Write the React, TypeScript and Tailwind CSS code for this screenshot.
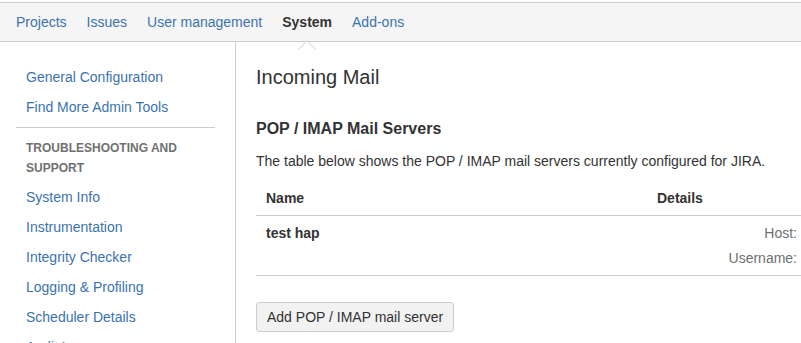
import React from "react";

const link = "text-[#3b73af]";

function Arrow() {
  return (
    <svg
      className="absolute left-1/2 -translate-x-1/2 bottom-[-9px]"
      width="18"
      height="10"
      viewBox="0 0 18 10"
    >
      <polygon points="0,10 9,1 18,10" fill="#ffffff" />
      <polyline points="0,9.5 9,0.8 18,9.5" fill="none" stroke="#cccccc" strokeWidth="1" />
    </svg>
  );
}

export default function App() {
  const navItems = ["Projects", "Issues", "User management", "System", "Add-ons"];
  const sideTop = ["General Configuration", "Find More Admin Tools"];
  const sideBottom = [
    "System Info",
    "Instrumentation",
    "Integrity Checker",
    "Logging & Profiling",
    "Scheduler Details",
    "Audit Log",
  ];
  return (
    <div
      className="w-[801px] h-[343px] overflow-hidden bg-white text-[14px] text-[#333333]"
      style={{ fontFamily: '"Liberation Sans", Arial, sans-serif' }}
    >
      <div className="pt-[2px]">
        <nav className="h-[40px] bg-[#f5f5f5] border-t border-b border-[#cccccc] flex items-center pl-[6px]">
          {navItems.map((n) => (
            <span
              key={n}
              className={
                n === "System"
                  ? "relative px-[10px] leading-[38px] font-bold text-[#333333]"
                  : `px-[10px] leading-[38px] ${link}`
              }
            >
              {n}
              {n === "System" && <Arrow />}
            </span>
          ))}
        </nav>
      </div>
      <div className="flex">
        <aside className="w-[236px] shrink-0 border-r border-[#cccccc] pt-[20px] pl-[16px] pr-[20px] h-[400px]">
          {sideTop.map((s) => (
            <div key={s} className={`pl-[10px] leading-[20px] py-[5px] ${link}`}>
              {s}
            </div>
          ))}
          <div className="border-t border-[#cccccc] mt-[5px] mb-[10px]" />
          <div className="pl-[10px] text-[12px] font-bold leading-[20px] text-[#707070] pr-[20px] mb-[4px]">
            TROUBLESHOOTING AND SUPPORT
          </div>
          {sideBottom.map((s) => (
            <div key={s} className={`pl-[10px] leading-[20px] py-[5px] ${link}`}>
              {s}
            </div>
          ))}
        </aside>
        <main className="flex-1 min-w-0 pl-[20px] pt-[23px]">
          <h1 className="text-[20px] leading-[24px] font-normal">Incoming Mail</h1>
          <h2 className="mt-[30px] text-[16px] leading-[20px] font-bold">POP / IMAP Mail Servers</h2>
          <p className="mt-[12px] leading-[20px]">
            The table below shows the POP / IMAP mail servers currently configured for JIRA.
          </p>
          <div className="mt-[10px] w-[700px]">
            <div className="grid grid-cols-[391px_1fr] border-b border-[#cccccc] py-[7px] font-bold leading-[20px]">
              <div className="pl-[10px]">Name</div>
              <div className="pl-[10px]">Details</div>
            </div>
            <div className="grid grid-cols-[391px_1fr] border-b border-[#cccccc] pt-[7px] pb-[7px] leading-[20px]">
              <div className="pl-[10px] font-bold">test hap</div>
              <div className="pl-[10px] flex flex-col gap-[5px]">
                <div className="w-[140px] text-right text-[#707070]">Host:</div>
                <div className="w-[140px] text-right text-[#707070]">Username:</div>
              </div>
            </div>
          </div>
          <button className="mt-[26px] h-[30px] px-[10px] border border-[#cccccc] rounded-[3px] bg-[#f2f2f2] text-[#333333] text-[14px] leading-[20px]">
            Add POP / IMAP mail server
          </button>
        </main>
      </div>
    </div>
  );
}
